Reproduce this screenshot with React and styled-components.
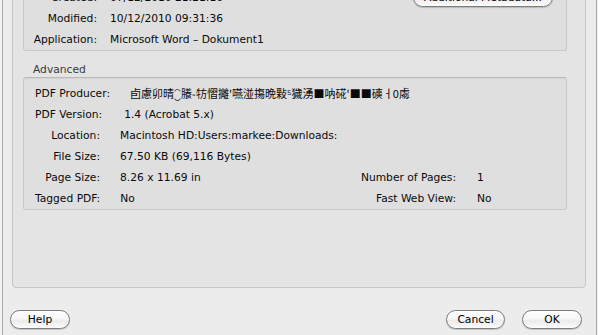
import React from "react";
import styled, { createGlobalStyle } from "styled-components";

const Global = createGlobalStyle`
  html, body { margin: 0; padding: 0; background: #f3f3f3; }
  body { width: 598px; height: 335px; overflow: hidden; }
  #root { width: 598px; height: 335px; }
`;

const Window = styled.div`
  margin-left: 2px;
  width: 593px;
  height: 335px;
  border-left: 1px solid #a8a8a8;
  border-right: 1px solid #a8a8a8;
  background: #ececec;
  display: flex;
  flex-direction: column;
  overflow: hidden;
  font-family: "DejaVu Sans", "Liberation Sans", sans-serif;
  font-size: 10.7px;
  color: #0a0a0a;
`;

const Panel = styled.div`
  margin: -29px 10px 0 9px;
  padding: 10px 18px 77px 10px;
  background: #e4e4e4;
  border: 1px solid #c6c6c6;
  border-radius: 4px;
  display: flex;
  flex-direction: column;
`;

const Box = styled.div`
  background: #dfdfdf;
  border: 1px solid #c9c9c9;
  border-top-color: #b9b9b9;
  border-radius: 3px;
  box-shadow: inset 0 1px 1px rgba(0, 0, 0, 0.05);
  padding: ${(p) => p.$pad};
  display: flex;
  flex-direction: column;
`;

const Row = styled.div`
  display: flex;
  align-items: center;
  height: 21px;
  line-height: 21px;
  gap: ${(p) => p.$gap}px;
  padding-left: ${(p) => p.$indent || 0}px;
  white-space: nowrap;
`;

const Label = styled.span`
  flex-shrink: 0;
  min-width: ${(p) => p.$w}px;
  text-align: right;
`;

const Value = styled.span`
  padding-left: ${(p) => p.$shift || 0}px;
`;

const Cjk = styled.span`
  font-family: "Noto Sans CJK SC", "Noto Sans CJK JP", sans-serif;
  font-size: 11px;
`;

const RightPair = styled.div`
  margin-left: auto;
  display: flex;
  gap: 21px;
`;

const RightLabel = styled.span`
  width: 140px;
  text-align: right;
`;

const RightValue = styled.span`
  width: 89px;
`;

const SectionTitle = styled.div`
  margin: 12px 0 0 10px;
  height: 14px;
  line-height: 14px;
  color: #3a3a3a;
`;

const PillButton = styled.button`
  flex-shrink: 0;
  width: ${(p) => p.$w}px;
  height: 19px;
  padding: 0;
  border: 1px solid #7d7d7d;
  border-radius: 10px;
  background: linear-gradient(
    #ffffff 0%,
    #f7f7f7 45%,
    #ececec 55%,
    #f6f6f6 85%,
    #ffffff 100%
  );
  box-shadow: 0 1px 1px rgba(0, 0, 0, 0.18);
  font-family: "DejaVu Sans", "Liberation Sans", sans-serif;
  font-size: 10.7px;
  color: #000;
  line-height: 17px;
`;

const Spacer = styled.div`
  flex: 1;
`;

const Footer = styled.div`
  display: flex;
  align-items: center;
  padding: 22px 14px 0 7px;
  gap: 17px;
`;

const producer =
  "卣慮卯晴⁐䑆⁃牥慴攡'嚥湴摥晩敤⁵獩湧■呐硴'■■磢ㅓ0䖏";

export default function App() {
  return (
    <>
      <Global />
      <Window>
        <Panel>
          <Box $pad="4px 13px 0 0">
            <Row $gap={13}>
              <Label $w={73}>Created:</Label>
              <Value>07/12/2010 21:21:16</Value>
              <Spacer />
              <PillButton $w={140}>Additional Metadata...</PillButton>
            </Row>
            <Row $gap={13}>
              <Label $w={73}>Modified:</Label>
              <Value>10/12/2010 09:31:36</Value>
            </Row>
            <Row $gap={13}>
              <Label $w={73}>Application:</Label>
              <Value>Microsoft Word – Dokument1</Value>
            </Row>
          </Box>
          <SectionTitle>Advanced</SectionTitle>
          <Box $pad="5px 0 0 0">
            <Row $gap={20} $indent={11}>
              <Label $w={65}>PDF Producer:</Label>
              <Cjk>{producer}</Cjk>
            </Row>
            <Row $gap={20} $indent={11}>
              <Label $w={65}>PDF Version:</Label>
              <Value $shift={2}>1.4 (Acrobat 5.x)</Value>
            </Row>
            <Row $gap={20} $indent={11}>
              <Label $w={65}>Location:</Label>
              <Value>Macintosh HD:Users:markee:Downloads:</Value>
            </Row>
            <Row $gap={20} $indent={11}>
              <Label $w={65}>File Size:</Label>
              <Value>67.50 KB (69,116 Bytes)</Value>
            </Row>
            <Row $gap={20} $indent={11}>
              <Label $w={65}>Page Size:</Label>
              <Value>8.26 x 11.69 in</Value>
              <RightPair>
                <RightLabel>Number of Pages:</RightLabel>
                <RightValue>1</RightValue>
              </RightPair>
            </Row>
            <Row $gap={20} $indent={11}>
              <Label $w={65}>Tagged PDF:</Label>
              <Value>No</Value>
              <RightPair>
                <RightLabel>Fast Web View:</RightLabel>
                <RightValue>No</RightValue>
              </RightPair>
            </Row>
          </Box>
        </Panel>
        <Footer>
          <PillButton $w={60}>Help</PillButton>
          <Spacer />
          <PillButton $w={59}>Cancel</PillButton>
          <PillButton $w={60}>OK</PillButton>
        </Footer>
      </Window>
    </>
  );
}
